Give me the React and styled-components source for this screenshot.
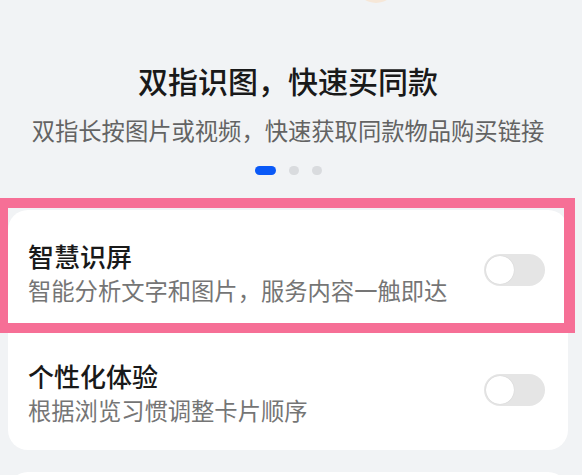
import React from "react";
import styled, { createGlobalStyle } from "styled-components";

const GlobalStyle = createGlobalStyle`
  html, body {
    margin: 0;
    padding: 0;
    background: #f1f3f5;
    font-family: "Noto Sans CJK SC", "Noto Sans", sans-serif;
  }
`;

const Page = styled.div`
  width: 582px;
  height: 475px;
  overflow: hidden;
  padding: 0 14px 0 8px;
  box-sizing: border-box;
  background: #f1f3f5;
`;

const Illustration = styled.svg`
  display: block;
  width: 560px;
  height: 20px;
`;

const Hero = styled.div`
  display: flex;
  flex-direction: column;
  align-items: center;
  padding-top: 40px;
`;

const HeroTitle = styled.div`
  font-size: 30px;
  line-height: 40px;
  font-weight: 500;
  color: #191919;
`;

const HeroText = styled.div`
  margin-top: 14px;
  font-size: 23.3px;
  line-height: 32px;
  color: #636363;
`;

const Dots = styled.div`
  display: flex;
  gap: 13px;
  margin-top: 20px;
`;

const Dot = styled.span`
  width: ${({ active }) => (active ? "21px" : "10px")};
  height: 9px;
  border-radius: 5px;
  background: ${({ active }) => (active ? "#0a59f7" : "#d9dbde")};
`;

const Card = styled.div`
  background: #fff;
  border-radius: 20px;
  margin-top: ${({ top }) => top}px;
  height: ${({ h }) => (h ? `${h}px` : "auto")};
`;

const Row = styled.div`
  position: relative;
  display: flex;
  align-items: center;
  justify-content: space-between;
  height: 120px;
  box-sizing: border-box;
  padding: 28px 23px 22px 20px;
`;

const Texts = styled.div`
  display: flex;
  flex-direction: column;
`;

const RowTitle = styled.div`
  font-size: 26px;
  line-height: 35px;
  font-weight: 500;
  color: #191919;
`;

const RowText = styled.div`
  font-size: 23.3px;
  line-height: 35px;
  color: #757575;
`;

const Switch = styled.div`
  position: relative;
  width: 61px;
  height: 32px;
  margin-top: -6px;
  border-radius: 16px;
  background: #e5e5e5;
  flex-shrink: 0;
`;

const Knob = styled.span`
  position: absolute;
  left: 2px;
  top: 2px;
  width: 28px;
  height: 28px;
  border-radius: 50%;
  background: #fff;
  box-shadow: 0 0 1px rgba(0, 0, 0, 0.18);
`;

const Highlight = styled.div`
  position: absolute;
  left: -8px;
  top: -12px;
  right: -7px;
  bottom: -3px;
  border-style: solid;
  border-color: #f66f96;
  border-width: 10px 11px 10px 8px;
  pointer-events: none;
`;

const items = [
  { title: "智慧识屏", text: "智能分析文字和图片，服务内容一触即达", marked: true },
  { title: "个性化体验", text: "根据浏览习惯调整卡片顺序" },
];

export default function App() {
  return (
    <Page>
      <GlobalStyle />
      <Illustration viewBox="0 0 560 20">
        <ellipse cx="368" cy="-12" rx="18" ry="15" fill="#f6e7d8" />
      </Illustration>
      <Hero>
        <HeroTitle>双指识图，快速买同款</HeroTitle>
        <HeroText>双指长按图片或视频，快速获取同款物品购买链接</HeroText>
        <Dots>
          <Dot active />
          <Dot />
          <Dot />
        </Dots>
      </Hero>
      <Card top={35}>
        {items.map((it) => (
          <Row key={it.title}>
            <Texts>
              <RowTitle>{it.title}</RowTitle>
              <RowText>{it.text}</RowText>
            </Texts>
            <Switch>
              <Knob />
            </Switch>
            {it.marked && <Highlight />}
          </Row>
        ))}
      </Card>
      <Card top={22} h={60} />
    </Page>
  );
}
